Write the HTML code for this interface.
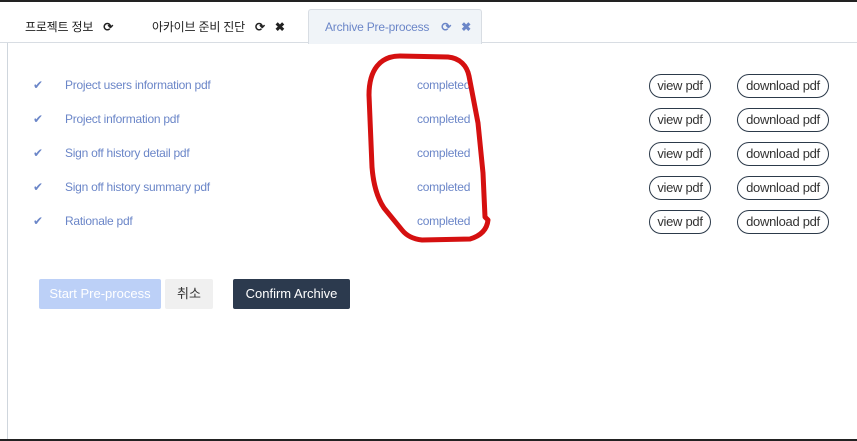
<!DOCTYPE html>
<html><head><meta charset="utf-8"><style>
*{box-sizing:border-box;margin:0;padding:0}
body{width:857px;height:441px;background:#fff;font-family:"Liberation Sans","Noto Sans CJK KR",sans-serif;position:relative;overflow:hidden}
.top{position:absolute;left:0;top:0;width:857px;height:2px;background:#222}
.bot{position:absolute;left:0;top:439px;width:857px;height:2px;background:#222}
.tabs{position:absolute;left:0;top:2px;width:857px;height:41px;border-bottom:1px solid #d8dde3}
.tab{position:absolute;font-size:12px;color:#222;display:flex;align-items:center;gap:10px;white-space:nowrap;letter-spacing:-0.2px}
.tab.active{top:7px;height:35px;border:1px solid #d8dde3;border-bottom:none;background:#f0f4f8;border-radius:3px 3px 0 0;color:#6b86c8;padding:0 16px;left:308px;width:174px}
.ic{font-size:12px;font-weight:bold}
.panel{position:absolute;left:7px;top:43px;width:850px;height:396px;border-left:1px solid #cfd6dd}
.row{position:absolute;left:0;width:850px;height:24px;font-size:12px;color:#6b86c8;letter-spacing:-0.25px}
.chk{position:absolute;left:25px;top:4px;font-size:12px;color:#6b86c8}
.name{position:absolute;left:57px;top:4px}
.st{position:absolute;left:409px;top:4px}
.btn{position:absolute;top:0;height:24px;border:1px solid #2c3a4a;border-radius:12px;color:#333;font-size:13px;line-height:22px;text-align:center;background:#fff;letter-spacing:-0.3px}
.b{position:absolute;top:236px;height:30px;line-height:30px;font-size:13px;border-radius:2px;text-align:center}
</style></head><body>
<div class="top"></div>
<div class="tabs">
 <div class="tab" style="left:25px;top:16px">프로젝트 정보 <span class="ic">⟳</span></div>
 <div class="tab" style="left:152px;top:16px">아카이브 준비 진단 <span class="ic">⟳</span> <span class="ic">✖</span></div>
 <div class="tab active">Archive Pre-process <span class="ic" style="margin-left:2px">⟳</span> <span class="ic">✖</span></div>
</div>
<div class="panel">
 <div class="row" style="top:31px"><span class="chk">✔</span><span class="name">Project users information pdf</span><span class="st">completed</span><div class="btn" style="left:641px;width:62px">view pdf</div><div class="btn" style="left:729px;width:92px">download pdf</div></div>
 <div class="row" style="top:65px"><span class="chk">✔</span><span class="name">Project information pdf</span><span class="st">completed</span><div class="btn" style="left:641px;width:62px">view pdf</div><div class="btn" style="left:729px;width:92px">download pdf</div></div>
 <div class="row" style="top:99px"><span class="chk">✔</span><span class="name">Sign off history detail pdf</span><span class="st">completed</span><div class="btn" style="left:641px;width:62px">view pdf</div><div class="btn" style="left:729px;width:92px">download pdf</div></div>
 <div class="row" style="top:133px"><span class="chk">✔</span><span class="name">Sign off history summary pdf</span><span class="st">completed</span><div class="btn" style="left:641px;width:62px">view pdf</div><div class="btn" style="left:729px;width:92px">download pdf</div></div>
 <div class="row" style="top:167px"><span class="chk">✔</span><span class="name">Rationale pdf</span><span class="st">completed</span><div class="btn" style="left:641px;width:62px">view pdf</div><div class="btn" style="left:729px;width:92px">download pdf</div></div>
 <div class="b" style="left:31px;width:122px;background:#bcd0f7;color:#fff">Start Pre-process</div>
 <div class="b" style="left:157px;width:48px;background:#f0f0f0;color:#333">취소</div>
 <div class="b" style="left:225px;width:117px;background:#2c3a4e;color:#fff">Confirm Archive</div>
</div>
<svg style="position:absolute;left:0;top:0" width="857" height="441"><path d="M369 95 C369 70 380 56 400 56 L448 57 C460 58 467 66 469 76 L478 123 L483 173 L485 217 L488 220 C487 230 480 236 470 239 L422 240 C412 239 406 235 402 230 L384 208 C376 196 373 180 372 167 Z" fill="none" stroke="#d51010" stroke-width="5" stroke-linejoin="round"/></svg>
<div class="bot"></div>
</body></html>
